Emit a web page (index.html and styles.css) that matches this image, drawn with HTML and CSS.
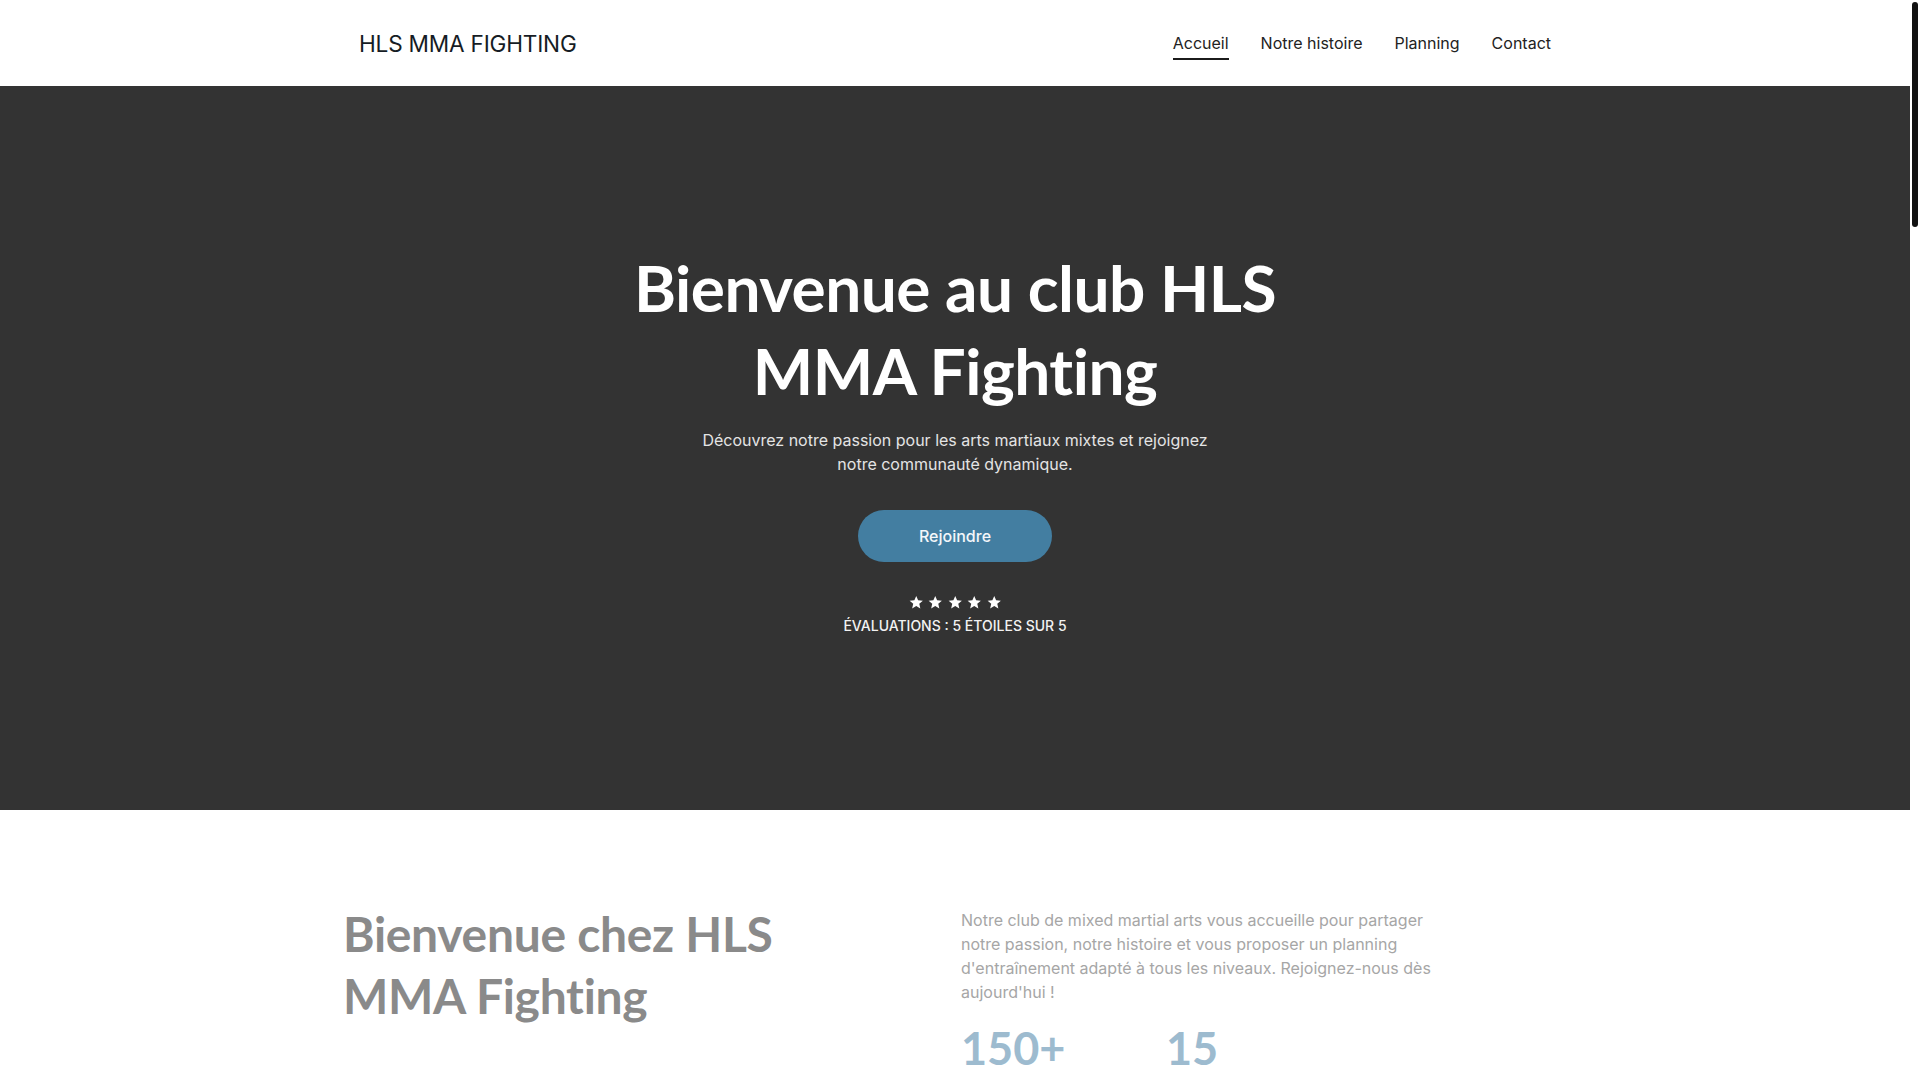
FILE: index.html
```html
<!DOCTYPE html>
<html lang="fr">
<head>
<meta charset="utf-8">
<title>HLS MMA FIGHTING</title>
<link rel="stylesheet" href="styles.css">
</head>
<body>
<header class="site-header">
  <div class="header-inner">
    <a class="logo" href="#">HLS MMA FIGHTING</a>
    <nav class="nav">
      <a class="nav-link active" href="#">Accueil</a>
      <a class="nav-link" href="#">Notre histoire</a>
      <a class="nav-link" href="#">Planning</a>
      <a class="nav-link" href="#">Contact</a>
    </nav>
  </div>
</header>

<section class="hero">
  <h1 class="hero-title">Bienvenue au club HLS MMA Fighting</h1>
  <p class="hero-sub">Découvrez notre passion pour les arts martiaux mixtes et rejoignez notre communauté dynamique.</p>
  <a class="btn" href="#">Rejoindre</a>
  <div class="stars">
    <svg class="star" viewBox="0 0 24 24"><path d="M12 1.5l3.09 7.26 7.86.68-5.96 5.17 1.79 7.69L12 18.2l-6.78 4.1 1.790-7.69L1.05 9.44l7.86-.68z"/></svg>
    <svg class="star" viewBox="0 0 24 24"><path d="M12 1.5l3.09 7.26 7.86.68-5.96 5.17 1.79 7.69L12 18.2l-6.78 4.1 1.79-7.69L1.05 9.44l7.86-.68z"/></svg>
    <svg class="star" viewBox="0 0 24 24"><path d="M12 1.5l3.09 7.26 7.86.68-5.96 5.17 1.79 7.69L12 18.2l-6.78 4.1 1.79-7.69L1.05 9.44l7.86-.68z"/></svg>
    <svg class="star" viewBox="0 0 24 24"><path d="M12 1.5l3.09 7.26 7.86.68-5.96 5.17 1.79 7.69L12 18.2l-6.78 4.1 1.79-7.69L1.05 9.44l7.86-.68z"/></svg>
    <svg class="star" viewBox="0 0 24 24"><path d="M12 1.5l3.09 7.26 7.86.68-5.96 5.17 1.79 7.69L12 18.2l-6.78 4.1 1.79-7.69L1.05 9.44l7.86-.68z"/></svg>
  </div>
  <p class="rating">ÉVALUATIONS : 5 ÉTOILES SUR 5</p>
</section>

<section class="about">
  <div class="about-inner">
    <h2 class="about-title">Bienvenue chez HLS MMA Fighting</h2>
    <div class="about-right">
      <p class="about-text">Notre club de mixed martial arts vous accueille pour partager notre passion, notre histoire et vous proposer un planning d'entraînement adapté à tous les niveaux. Rejoignez-nous dès aujourd'hui !</p>
      <div class="stats">
        <div class="stat"><div class="stat-num">150+</div><div class="stat-label">Membres actifs</div></div>
        <div class="stat"><div class="stat-num">15</div><div class="stat-label">Années d'expérience</div></div>
      </div>
    </div>
  </div>
</section>

<section class="block">
  <div class="block-inner">
    <h2 class="block-title">Notre histoire</h2>
    <p class="block-text">Fondé par des passionnés, le club HLS MMA Fighting réunit des pratiquants de tous horizons.</p>
  </div>
</section>

<section class="block block-alt">
  <div class="block-inner">
    <h2 class="block-title">Planning</h2>
    <p class="block-text">Des cours pour débutants, confirmés et compétiteurs, tout au long de la semaine.</p>
  </div>
</section>

<section class="block">
  <div class="block-inner">
    <h2 class="block-title">Contact</h2>
    <p class="block-text">Contactez-nous pour un cours d'essai.</p>
  </div>
</section>

<footer class="footer">
  <p>© HLS MMA FIGHTING</p>
</footer>

<div class="fake-scrollbar"><div class="fake-thumb"></div></div>
</body>
</html>
```

FILE: styles.css
```css
html::-webkit-scrollbar {
  display: none;
}
html {
  scrollbar-width: none;
}

* {
  box-sizing: border-box;
}

body {
  margin: 0 10px 0 0;
  font-family: Inter, "Liberation Sans", sans-serif;
  color: #1b1b1b;
  background: #ffffff;
}

a {
  text-decoration: none;
  color: inherit;
}

.fake-scrollbar {
  position: fixed;
  top: 0;
  right: 0;
  width: 10px;
  height: 100vh;
  background: #ffffff;
}

.fake-thumb {
  position: absolute;
  top: 2px;
  left: 2px;
  width: 6px;
  height: 225px;
  border-radius: 3px;
  background: #111111;
}

.site-header {
  height: 86px;
  background: #ffffff;
}

.header-inner {
  width: 1192px;
  height: 100%;
  margin: 0 auto;
  display: flex;
  align-items: center;
  justify-content: space-between;
}

.logo {
  font-size: 22.6px;
  font-weight: 400;
  color: #161c24;
  letter-spacing: -0.2px;
}

.nav {
  display: flex;
  gap: 32px;
  align-items: center;
}

.nav-link {
  font-size: 16px;
  color: #222222;
  padding: 6px 0 5px;
  border-bottom: 2px solid transparent;
  line-height: 20px;
}

.nav-link.active {
  border-bottom-color: #1b1b1b;
}

.hero {
  background: #333333;
  height: 724px;
  padding-top: 160px;
  display: flex;
  flex-direction: column;
  align-items: center;
  text-align: center;
  color: #ffffff;
}

.hero-title {
  margin: 0;
  max-width: 720px;
  font-family: Lato, "Open Sans", sans-serif;
  font-weight: 700;
  font-size: 64px;
  line-height: 83px;
  color: #ffffff;
  letter-spacing: -0.5px;
}

.hero-sub {
  margin: 16px 0 0;
  max-width: 520px;
  font-size: 16px;
  line-height: 24px;
  color: #e4e4e4;
}

.btn {
  margin-top: 34px;
  width: 194px;
  height: 52px;
  border-radius: 26px;
  background: #437ea1;
  color: #f4f7fa;
  font-size: 16px;
  font-weight: 500;
  display: flex;
  align-items: center;
  justify-content: center;
}

.stars {
  margin-top: 32px;
  display: flex;
  gap: 5px;
  height: 16px;
  align-items: center;
}

.star {
  width: 14.5px;
  height: 14.5px;
  fill: #ffffff;
}

.rating {
  margin: 7px 0 0;
  font-size: 14px;
  line-height: 18px;
  font-weight: 500;
  color: #f2f2f2;
}

.about {
  padding: 93px 0 120px;
  background: #ffffff;
}

.about-inner {
  width: 1224px;
  margin: 0 auto;
  display: grid;
  grid-template-columns: 1fr 1fr;
  gap: 12px;
}

.about-title {
  margin: 0;
  max-width: 460px;
  font-family: Lato, "Open Sans", sans-serif;
  font-weight: 700;
  font-size: 48px;
  line-height: 62px;
  color: #8a8a8a;
  letter-spacing: -0.3px;
}

.about-right {
  padding-top: 5px;
}

.about-text {
  margin: 0;
  max-width: 480px;
  font-size: 16px;
  line-height: 24px;
  color: #a6a6a6;
}

.stats {
  margin-top: 14px;
  display: flex;
}

.stat {
  width: 205px;
}

.stat-num {
  font-family: Lato, "Open Sans", sans-serif;
  font-weight: 700;
  font-size: 45px;
  line-height: 60px;
  color: #9dbbcf;
}

.stat-label {
  font-size: 16px;
  color: #a6a6a6;
  margin-top: 4px;
}

.block {
  min-height: 1200px;
  padding: 100px 0;
  background: #ffffff;
}

.block-alt {
  background: #f6f6f6;
  min-height: 1400px;
}

.block-inner {
  width: 1224px;
  margin: 0 auto;
}

.block-title {
  margin: 0 0 20px;
  font-family: Lato, "Open Sans", sans-serif;
  font-size: 44px;
  color: #333333;
}

.block-text {
  margin: 0;
  font-size: 17px;
  line-height: 24px;
  color: #777777;
}

.footer {
  min-height: 290px;
  background: #333333;
  color: #dddddd;
  text-align: center;
  padding-top: 80px;
  font-size: 15px;
}
```
